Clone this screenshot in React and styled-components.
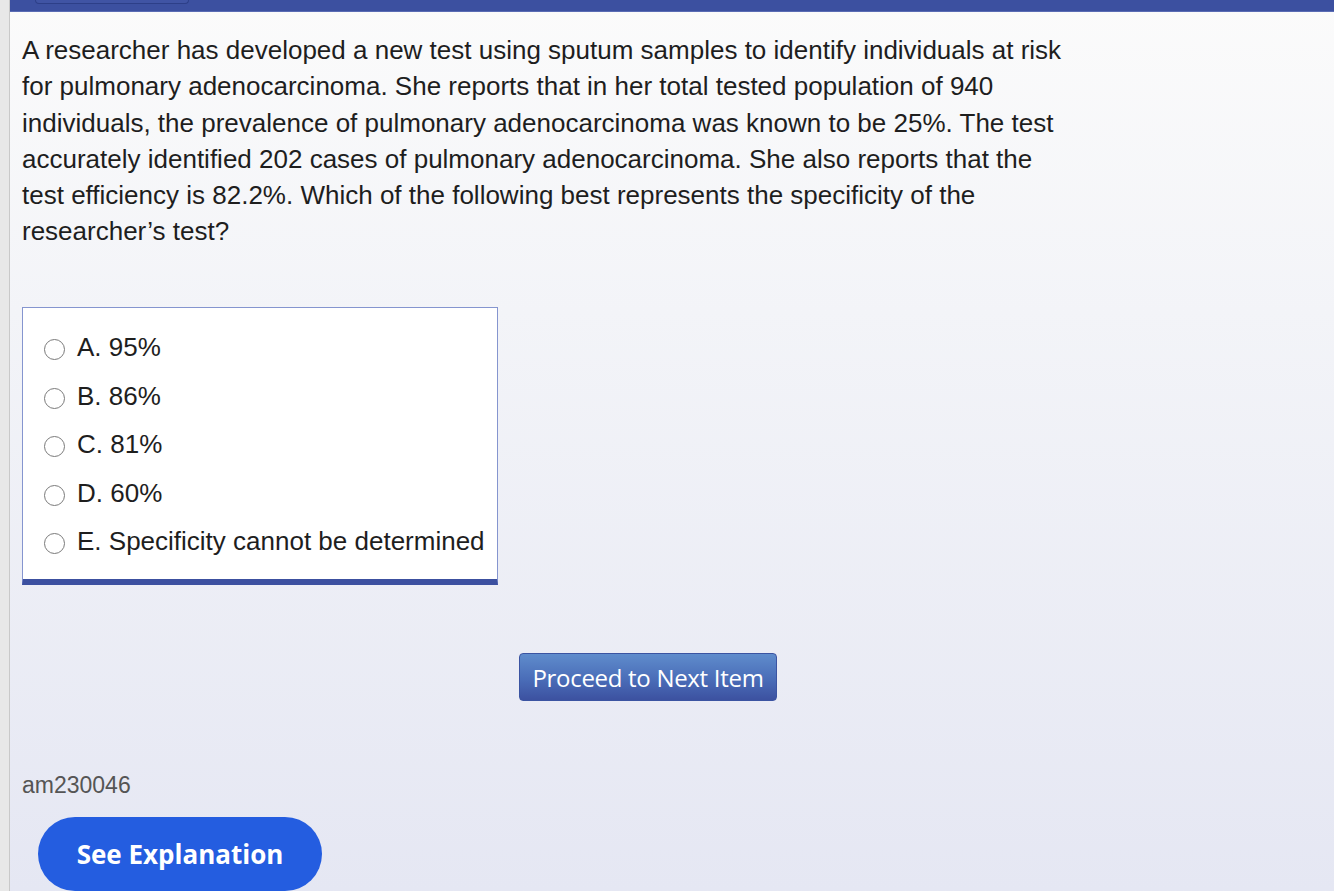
import styled, { createGlobalStyle } from "styled-components";

const GlobalStyle = createGlobalStyle`
  html, body {
    margin: 0;
    padding: 0;
    height: 100%;
  }
  body {
    font-family: "Liberation Sans", Arial, sans-serif;
    overflow: hidden;
  }
`;

const Page = styled.div`
  display: flex;
  height: 891px;
  width: 1334px;
`;

const SideStrip = styled.div`
  width: 9px;
  flex-shrink: 0;
  background: #e8e8e8;
  border-right: 1px solid #c9c9c9;
`;

const Main = styled.div`
  flex: 1;
  display: flex;
  flex-direction: column;
  background: linear-gradient(to bottom, #fbfbfb 0%, #f3f4f8 35%, #e5e7f3 100%);
`;

const TopBar = styled.div`
  height: 13px;
  background: #3c50a0;
  border-bottom: 1px solid #5a6cb4;
  padding-left: 25px;
`;

const TabStub = styled.div`
  width: 152px;
  height: 3px;
  border: 1px solid #2d3f88;
  border-top: none;
  border-radius: 0 0 6px 6px;
  background: #4054a4;
`;

const Content = styled.div`
  padding: 20px 0 0 12px;
  display: flex;
  flex-direction: column;
`;

const Question = styled.p`
  margin: 0;
  width: 1050px;
  font-size: 26px;
  line-height: 36.2px;
  color: #1e1e1e;
`;

const Choices = styled.div`
  margin-top: 57px;
  width: 476px;
  box-sizing: border-box;
  background: #fff;
  border: 1px solid #8595cf;
  border-bottom: 6px solid #3c50a0;
  padding: 16px 0 13px 21px;
`;

const Choice = styled.label`
  display: flex;
  align-items: center;
  height: 48.5px;
  font-size: 26px;
  color: #1e1e1e;
  white-space: nowrap;
`;

const Radio = styled.span`
  width: 19px;
  height: 19px;
  border: 1.5px solid #7a7a7a;
  border-radius: 50%;
  margin-top: 4px;
  margin-right: 12px;
  flex-shrink: 0;
  background: #fff;
`;

const ButtonRow = styled.div`
  width: 1252px;
  display: flex;
  justify-content: center;
  margin-top: 68px;
`;

const NextButton = styled.button`
  width: 258px;
  height: 48px;
  border: 1px solid #3b54a2;
  border-radius: 4px;
  background: linear-gradient(to bottom, #5f8ccc 0%, #4a6db8 55%, #3c51a0 100%);
  color: #fff;
  font-family: "Open Sans", sans-serif;
  font-size: 24px;
  letter-spacing: -0.3px;
  padding: 0;
`;

const ItemId = styled.div`
  margin-top: 71px;
  font-size: 23px;
  line-height: 26px;
  color: #555;
`;

const ExplainButton = styled.button`
  margin-top: 19px;
  margin-left: 16px;
  width: 284px;
  height: 74px;
  border: none;
  border-radius: 37px;
  background: #245de0;
  color: #fff;
  font-family: "Open Sans", sans-serif;
  font-weight: 700;
  font-size: 26px;
  padding: 0;
`;

const choices = [
  "A. 95%",
  "B. 86%",
  "C. 81%",
  "D. 60%",
  "E. Specificity cannot be determined",
];

export default function App() {
  return (
    <>
      <GlobalStyle />
      <Page>
        <SideStrip />
        <Main>
          <TopBar>
            <TabStub />
          </TopBar>
          <Content>
            <Question>
              A researcher has developed a new test using sputum samples to
              identify individuals at risk for pulmonary adenocarcinoma. She
              reports that in her total tested population of 940 individuals,
              the prevalence of pulmonary adenocarcinoma was known to be 25%.
              The test accurately identified 202 cases of pulmonary
              adenocarcinoma. She also reports that the test efficiency is
              82.2%. Which of the following best represents the specificity of
              the researcher’s test?
            </Question>

            <Choices>
              {choices.map((c) => (
                <Choice key={c}>
                  <Radio />
                  {c}
                </Choice>
              ))}
            </Choices>

            <ButtonRow>
              <NextButton>Proceed to Next Item</NextButton>
            </ButtonRow>

            <ItemId>am230046</ItemId>
            <ExplainButton>See Explanation</ExplainButton>
          </Content>
        </Main>
      </Page>
    </>
  );
}
